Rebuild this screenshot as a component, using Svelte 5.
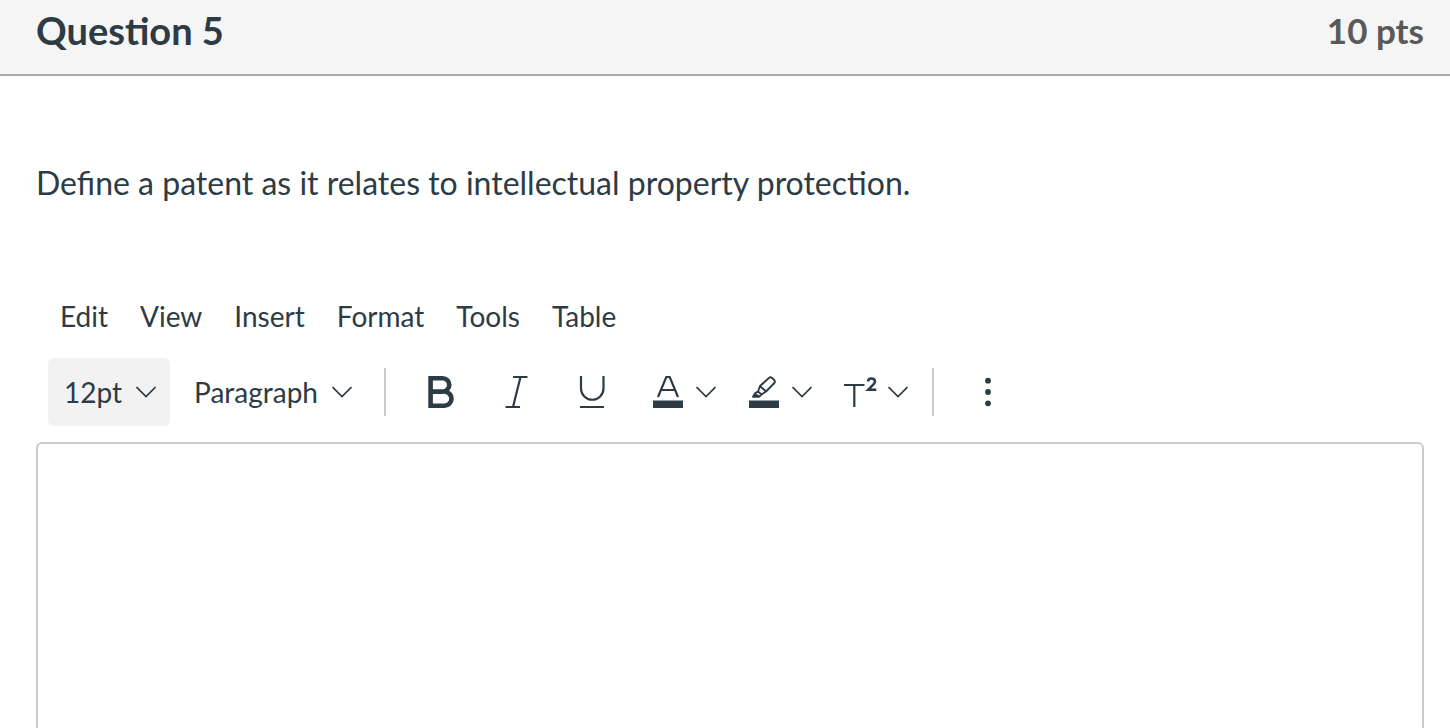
<script>
	let size = $state('12pt');
	let block = $state('Paragraph');
	let answer = $state('');

	const menus = ['Edit', 'View', 'Insert', 'Format', 'Tools', 'Table'];
	const sizes = ['8pt', '10pt', '12pt', '14pt', '18pt', '24pt', '36pt'];
	const blocks = ['Heading 2', 'Heading 3', 'Heading 4', 'Preformatted', 'Paragraph'];
</script>

{#snippet chevron()}
	<svg class="chevron" viewBox="0 0 20 12" aria-hidden="true">
		<path d="M.5 1 10 10.500 19.500 1" />
	</svg>
{/snippet}

<section class="question">
	<header>
		<h2>Question 5</h2>
		<span class="points">10 pts</span>
	</header>

	<div class="body">
		<p class="prompt" id="prompt">Define a patent as it relates to intellectual property protection.</p>

		<div class="menubar" role="menubar">
			{#each menus as menu}
				<button type="button" role="menuitem">{menu}</button>
			{/each}
		</div>

		<div class="toolbar" role="toolbar" aria-label="Formatting">
			<div class="picker active">
				<select aria-label="Font size" bind:value={size}>
					{#each sizes as option}
						<option>{option}</option>
					{/each}
				</select>
				{@render chevron()}
			</div>
			<div class="picker">
				<select aria-label="Block style" bind:value={block}>
					{#each blocks as option}
						<option>{option}</option>
					{/each}
				</select>
				{@render chevron()}
			</div>

			<div class="group">
				<button type="button" class="tool" aria-label="Bold">
					<svg class="icon" viewBox="0 0 32 32" aria-hidden="true">
						<path class="heavy" d="M6.600 2.300H18.600a6.600 6.600 0 0 1 0 13.300H6.600M20.500 15.700a7 7 0 0 1 0 14H6.600M6.600 0v32" />
					</svg>
				</button>
				<button type="button" class="tool" aria-label="Italic">
					<svg class="icon" viewBox="0 0 32 32" aria-hidden="true">
						<path class="line" d="M13 1H27.500M5.500 31H20M20.500 1 13 31" />
					</svg>
				</button>
				<button type="button" class="tool" aria-label="Underline">
					<svg class="icon" viewBox="0 0 32 32" aria-hidden="true">
						<path class="line" d="M5 0V12.500a11 11 0 0 0 22.500 0V0M4 31H28" />
					</svg>
				</button>
				<button type="button" class="tool split" aria-label="Text color">
					<svg class="icon" viewBox="0 0 32 32" aria-hidden="true">
						<path class="line" d="M6 21 14.300 1h3.400L26 21M9 14H23" />
						<path d="M1 24.500H31V32H1z" />
					</svg>
					{@render chevron()}
				</button>
				<button type="button" class="tool split" aria-label="Background color">
					<svg class="icon" viewBox="0 0 32 32" aria-hidden="true">
						<path class="thin" d="M12 10 21.200 1.700q1.500-1 3 .3l2 2q1.300 1.500.2 3L18 15.500zM12 10 10 15.500 13.500 18.500 18 15.500M10 15.500 7.200 17 5 20.700H11L13.500 18.500" />
						<path d="m8 17.500 3 1.700-1 1.500H5z" />
						<path d="M1 24.500H31V32H1z" />
					</svg>
					{@render chevron()}
				</button>
				<button type="button" class="tool split" aria-label="Superscript">
					<svg class="icon" viewBox="0 0 32 32" aria-hidden="true">
						<path class="line" d="M0 9H20.500M10.300 9V31" />
						<path class="small" d="M24 5.500Q24.200 2.500 27.500 2.500T31 5.500Q31 7 28.500 9.300L24.200 13.700H32.300" />
					</svg>
					{@render chevron()}
				</button>
			</div>

			<div class="group">
				<button type="button" class="tool" aria-label="More">
					<svg class="icon" viewBox="0 0 32 32" aria-hidden="true">
						<circle cx="16" cy="4.700" r="2.900" />
						<circle cx="16" cy="16" r="2.900" />
						<circle cx="16" cy="27.300" r="2.900" />
					</svg>
				</button>
			</div>
		</div>

		<textarea aria-labelledby="prompt" bind:value={answer}></textarea>
	</div>
</section>

<style>
	:global(body) {
		background: #fff;
	}

	.question {
		height: 100vh;
		overflow: hidden;
		color: #2d3b45;
		font-family: Lato, 'Liberation Sans', sans-serif;
	}

	header {
		display: flex;
		justify-content: space-between;
		align-items: center;
		padding: 0 26px 14px 36px;
		height: 60px;
		border-bottom: 2px solid #aaa;
		background: #f5f5f5;
	}

	h2 {
		margin: 0;
		font-size: 38px;
		font-weight: 700;
	}

	.points {
		color: #595959;
		font-size: 35px;
		font-weight: 700;
	}

	.body {
		padding: 84px 26px 0 36px;
	}

	.prompt {
		margin: 0 0 88px;
		font-size: 32px;
		line-height: 46px;
	}

	button,
	select {
		border: 0;
		background: transparent;
		color: inherit;
		font: inherit;
		font-size: 28px;
		cursor: pointer;
	}

	.menubar {
		display: flex;
		gap: 16px;
		padding-left: 16px;
	}

	.menubar button {
		height: 44px;
		padding: 0 8px;
	}

	.toolbar {
		display: flex;
		align-items: center;
		padding: 20px 12px 16px;
	}

	.picker {
		position: relative;
		margin-right: 8px;
		border-radius: 6px;
	}

	.picker.active {
		background: #f2f2f2;
	}

	.picker select {
		display: block;
		appearance: none;
		field-sizing: content;
		height: 68px;
		padding: 0 48px 0 16px;
	}

	.picker .chevron {
		position: absolute;
		top: 28px;
		right: 14px;
		pointer-events: none;
	}

	.group {
		display: flex;
		align-items: center;
		height: 48px;
		margin-left: 10px;
		padding-left: 20px;
		border-left: 2px solid #c7cdd1;
	}

	.tool {
		display: flex;
		align-items: center;
		justify-content: center;
		width: 68px;
		height: 68px;
		margin: 0 8px 0 0;
		padding: 0;
	}

	.tool.split {
		gap: 12px;
		width: 96px;
		margin: 0;
		padding-left: 4px;
	}

	.icon {
		width: 32px;
		height: 32px;
		overflow: visible;
		fill: currentColor;
	}

	.chevron {
		width: 20px;
		height: 12px;
		fill: none;
		stroke: currentColor;
		stroke-width: 1.7;
	}

	.heavy,
	.line,
	.thin,
	.small {
		fill: none;
		stroke: currentColor;
		stroke-width: 2.2;
	}

	.heavy {
		stroke-width: 4.6;
	}

	.thin {
		stroke-width: 1.9;
		stroke-linejoin: round;
	}

	.small {
		stroke-width: 2.5;
	}

	textarea {
		display: block;
		box-sizing: border-box;
		width: 100%;
		height: 400px;
		padding: 20px;
		border: 2px solid #c7cdd1;
		border-radius: 6px;
		outline: 0;
		resize: none;
		color: inherit;
		font: inherit;
		font-size: 32px;
	}
</style>
